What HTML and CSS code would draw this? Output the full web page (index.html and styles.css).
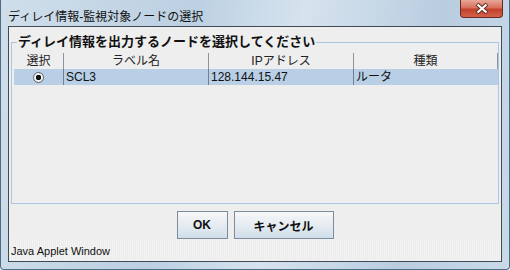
FILE: index.html
```html
<!DOCTYPE html>
<html lang="ja">
<head>
  <meta charset="UTF-8" />
  <title>ディレイ情報-監視対象ノードの選択</title>
  <link rel="stylesheet" href="styles.css">
</head>
<body>
  <div class="window">
    <div class="titlebar">
      <span class="title">ディレイ情報-監視対象ノードの選択</span>
      <div class="close">
        <svg width="18" height="11" viewBox="0 0 18 11">
          <path d="M4 1 L14 10 M14 1 L4 10" stroke="#5a2a22" stroke-width="4" />
          <path d="M4.5 1.5 L13.5 9.5 M13.5 1.5 L4.5 9.5" stroke="#ffffff" stroke-width="2.2" />
        </svg>
      </div>
    </div>

    <div class="panel">
      <fieldset class="group">
        <legend>ディレイ情報を出力するノードを選択してください</legend>
        <div class="scroll">
          <table class="nodes">
            <thead>
              <tr>
                <th class="c-sel">選択</th>
                <th class="c-label">ラベル名</th>
                <th class="c-ip">IPアドレス</th>
                <th class="c-kind">種類</th>
              </tr>
            </thead>
            <tbody>
              <tr class="selected">
                <td class="c-sel"><span class="radio"></span></td>
                <td>SCL3</td>
                <td>128.144.15.47</td>
                <td>ルータ</td>
              </tr>
            </tbody>
          </table>
        </div>
      </fieldset>

      <div class="buttons">
        <button class="btn btn-ok">OK</button>
        <button class="btn btn-cancel">キャンセル</button>
      </div>

      <div class="status">Java Applet Window</div>
    </div>
  </div>
</body>
</html>
```

FILE: styles.css
```css
html, body {
  margin: 0;
  padding: 0;
}
body {
  width: 510px;
  height: 270px;
  overflow: hidden;
  font-family: "Liberation Sans", "Noto Sans CJK JP", sans-serif;
}
.window {
  width: 510px;
  height: 270px;
  box-sizing: border-box;
  padding: 0 7px 7px 7px;
  background: linear-gradient(100deg, #cfdeea 0%, #bcd0e2 35%, #d6e3ee 55%, #b9cde0 80%, #c9dae9 100%);
  border: 1px solid #4e6b86;
  border-top: none;
  border-radius: 0 0 4px 4px;
  display: flex;
  flex-direction: column;
}
.titlebar {
  height: 27px;
  display: flex;
  align-items: flex-start;
  justify-content: space-between;
}
.title {
  font-size: 12px;
  margin-top: 7px;
  color: #101010;
}
.close {
  width: 43px;
  height: 18px;
  margin-right: -1px;
  box-sizing: border-box;
  border: 1px solid #6b2b22;
  border-top: none;
  border-radius: 0 0 4px 4px;
  background: linear-gradient(#e9a89a 0%, #d8705c 45%, #c2412a 55%, #d2614a 100%);
  display: flex;
  align-items: center;
  justify-content: center;
}
.panel {
  flex: 1;
  background: #eeeeee;
  border: 1px solid #414b55;
  display: flex;
  flex-direction: column;
}
.group {
  margin: 8px 2px 0 2px;
  padding: 4px 2px 2px 2px;
  height: 169px;
  box-sizing: border-box;
  border: 1px solid #a9c7e2;
  min-width: 0;
}
.group legend {
  font-size: 13px;
  font-weight: bold;
  padding: 0 1px;
  margin-left: 3px;
  color: #111;
  line-height: 14px;
}
.scroll {
  height: 100%;
}
.nodes {
  width: 484px;
  border-collapse: collapse;
  table-layout: fixed;
  font-size: 12px;
}
.nodes th {
  font-weight: normal;
  height: 16px;
  padding: 0;
  border-right: 1px solid #8c959e;
  background: #eeeeee;
  line-height: 15px;
  color: #222;
}
.c-sel { width: 49px; }
.c-label { width: 144px; }
.c-ip { width: 144px; }
.nodes td {
  height: 16px;
  padding: 0 0 0 2px;
  border-right: 1px solid #6f8093;
  line-height: 15px;
  color: #111;
  white-space: nowrap;
}
.nodes td:last-child {
  border-right: 1px solid #b8cfe6;
}
.selected {
  background: #b8cfe6;
}
.selected td.c-sel {
  text-align: center;
  padding: 0;
}
.radio {
  display: inline-block;
  width: 9px;
  height: 9px;
  border: 1px solid #5a5f66;
  border-radius: 50%;
  background: radial-gradient(circle, #111 0, #111 2.5px, #f4f4f4 3px);
  vertical-align: -2px;
}
.buttons {
  display: flex;
  justify-content: center;
  gap: 6px;
  margin-top: 7px;
}
.btn {
  height: 28px;
  box-sizing: border-box;
  border: 1px solid #7c8c9b;
  background: linear-gradient(#f6f7f8 0%, #e8edf2 45%, #cfdeea 100%);
  font-family: "Liberation Sans", "Noto Sans CJK JP", sans-serif;
  font-size: 12px;
  font-weight: bold;
  color: #111;
  padding: 0;
}
.btn-ok { width: 51px; }
.btn-cancel { width: 100px; }
.status {
  margin-top: auto;
  height: 22px;
  box-sizing: border-box;
  padding: 6px 0 0 2px;
  font-size: 11px;
  color: #111;
  background: repeating-linear-gradient(90deg, #ececec 0, #ececec 1px, #f3f3f3 1px, #f3f3f3 2px);
}
```
